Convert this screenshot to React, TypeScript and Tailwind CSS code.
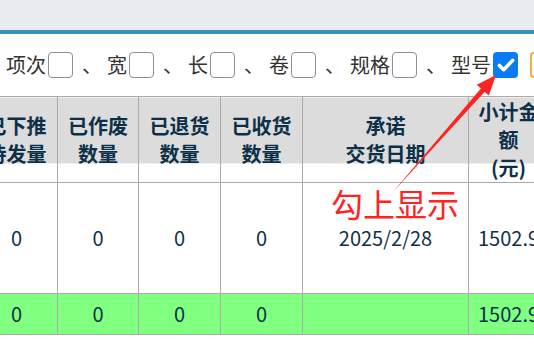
import React from "react"

type Opt = { label: string; checked?: boolean }

const options: Opt[] = [
  { label: "项次" },
  { label: "宽" },
  { label: "长" },
  { label: "卷" },
  { label: "规格" },
  { label: "型号", checked: true },
]

function Box({ checked }: { checked?: boolean }) {
  if (checked) {
    return (
      <span className="ml-[2px] flex h-[26px] w-[25px] shrink-0 items-center justify-center rounded-[4px] bg-[#0b7bf4]">
        <svg width="22" height="22" viewBox="0 0 16 16" fill="none">
          <path d="M3.2 8.3l3.1 3.1L12.9 4.6" stroke="#fff" strokeWidth="2.6" strokeLinecap="round" strokeLinejoin="round" />
        </svg>
      </span>
    )
  }
  return (
    <span className="ml-[2px] h-[26px] w-[25px] shrink-0 rounded-[4px] border-[1.5px] border-[#8f8f8f] bg-white" />
  )
}

const headers: React.ReactNode[] = [
  <>已下推<br />待发量</>,
  <>已作废<br />数量</>,
  <>已退货<br />数量</>,
  <>已收货<br />数量</>,
  <>承诺<br />交货日期</>,
  <>小计金额<br />(元)</>,
]

const widths = ["w-[82px]", "w-[81px]", "w-[82px]", "w-[82px]", "w-[166px]", "w-[80px]"]

const rows = [
  { cells: ["0", "0", "0", "0", "2025/2/28", "1502.90"], green: false },
  { cells: ["0", "0", "0", "0", "", "1502.90"], green: true },
]

export default function App() {
  return (
    <div className="relative h-[348px] w-[534px] overflow-hidden bg-white font-['Noto_Sans_CJK_SC','Noto_Sans',sans-serif]">
      <div className="h-[30px] bg-[#e9edf1]" />
      <div className="h-[4px] bg-[#3e8fba]" />

      <div className="flex h-[62px] items-center whitespace-nowrap pl-[6px] text-[20px] leading-[26px] text-[#333]">
        {options.map((o, i) => (
          <React.Fragment key={o.label}>
            <span className="shrink-0">{o.label}</span>
            <Box checked={o.checked} />
            {i < options.length - 1 ? (
              <span className="w-[34px] shrink-0 pl-[9px]">、</span>
            ) : null}
          </React.Fragment>
        ))}
        <button className="ml-[12px] h-[26px] w-[70px] shrink-0 rounded-[4px] border-2 border-[#f0ad4e] bg-white" />
      </div>

      <table className="-ml-[25px] w-[573px] table-fixed border-collapse text-[20px] text-[#0d3049]">
        <colgroup>
          {widths.map((w, i) => (
            <col key={i} className={w} />
          ))}
        </colgroup>
        <thead>
          <tr>
            {headers.map((h, i) => (
              <th
                key={i}
                className="h-[86px] border border-[#aaaaaa] bg-[linear-gradient(#dcdcdc_66px,#ffffff_66px)] px-[4px] align-middle text-center font-bold leading-[28px]"
              >
                {h}
              </th>
            ))}
          </tr>
        </thead>
        <tbody>
          {rows.map((r, ri) => (
            <tr key={ri} className={r.green ? "bg-[#80ff80]" : "bg-white"}>
              {r.cells.map((c, ci) => (
                <td
                  key={ci}
                  className={`border border-[#aaaaaa] text-center align-middle leading-[26px] ${
                    ci === 5 ? "pl-[9px] pr-[4px]" : "px-[4px]"
                  } ${r.green ? "h-[41px]" : "h-[111px]"}`}
                >
                  {c}
                </td>
              ))}
            </tr>
          ))}
        </tbody>
      </table>

      <span className="absolute left-[331px] top-[187px] text-[32px] leading-[32px] text-[#ff2222]">
        勾上显示
      </span>

      <svg className="pointer-events-none absolute inset-0" width="534" height="348" viewBox="0 0 534 348">
        <polygon
          points="392,193 484.7,91.7 488.8,95.4 496,75 476.8,84.8 480.9,88.5"
          fill="#ff2222"
        />
      </svg>
    </div>
  )
}
